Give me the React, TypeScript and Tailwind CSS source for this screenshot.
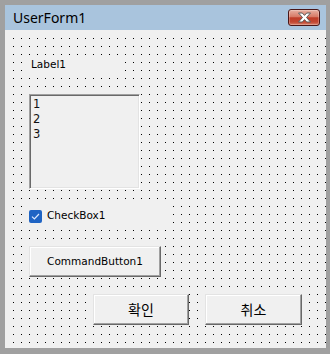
import React from "react";

const ui = "font-['DejaVu_Sans',sans-serif]";

const raised =
  "border border-t-[#e3e3e3] border-l-[#e3e3e3] border-r-[#696969] border-b-[#696969] shadow-[inset_-1px_-1px_0_#a0a0a0,inset_1px_1px_0_#ffffff] bg-[#f0f0f0]";

const CloseButton: React.FC = () => (
  <div className="w-[32px] h-[17px] rounded-[3px] border border-[#4a1616] bg-[linear-gradient(#e8b0a2,#d77a66_45%,#bf3d28_52%,#c24631_80%,#d9806a)] flex items-center justify-center shadow-[inset_0_0_0_1px_rgba(255,255,255,0.25)]">
    <svg width="15" height="11" viewBox="0 0 15 11">
      <path
        d="M1.5 1 H5.3 L7.5 3.4 L9.7 1 H13.5 L9.5 5.5 L13.5 10 H9.7 L7.5 7.6 L5.3 10 H1.5 L5.5 5.5 Z"
        fill="#ffffff"
        stroke="#5b5b5b"
        strokeWidth="1"
        strokeLinejoin="round"
      />
    </svg>
  </div>
);

const Button: React.FC<{ label: string; className?: string; font?: string }> = ({ label, className, font }) => (
  <div className={`${raised} flex items-center justify-center text-black ${font ?? ""} ${className ?? ""}`}>
    {label}
  </div>
);

export default function App() {
  return (
    <div className="w-[330px] h-[354px] bg-[#a0a0a0] pt-[5px] pl-[5px]">
      <div className="w-[321px] flex flex-col">
        {/* title bar */}
        <div className="h-[25px] bg-[#a9c4dd] flex items-center justify-between pl-[8px] pr-[6px]">
          <span className="font-['Noto_Sans',sans-serif] text-[14px] leading-none text-black">UserForm1</span>
          <CloseButton />
        </div>

        {/* client area */}
        <div className="h-[318px] bg-[#f0f0f0] pl-px pt-px flex">
          <div
            className={`flex-1 flex flex-col items-start bg-[image:conic-gradient(at_7px_7px,transparent_25%,#000_0_50%,transparent_0)] bg-size-[8px_8px] ${ui}`}
          >
            <div className="mt-[25px] ml-[21px] w-[96px] h-[18px] bg-[#f0f0f0] pl-[4px] pt-[1px] text-[10.5px] leading-[14px] text-black">
              Label1
            </div>

            <div className="mt-[20px] ml-[23px] w-[111px] h-[95px] bg-[#f0f0f0] border border-t-[#a0a0a0] border-l-[#a0a0a0] border-r-white border-b-white shadow-[inset_1px_1px_0_#696969,inset_-1px_-1px_0_#e3e3e3] pl-[3px] pt-[2px] text-[11.5px] leading-[15px] text-[#111]">
              <div>1</div>
              <div>2</div>
              <div>3</div>
            </div>

            <div className="mt-[15px] ml-[21px] w-[143px] h-[24px] bg-[#f0f0f0] flex items-center pl-[2px] gap-[5px] text-[10.5px] text-black">
              <div className="w-[13px] h-[13px] rounded-[2px] bg-[#1f64c4] flex items-center justify-center">
                <svg width="9" height="7" viewBox="0 0 9 7">
                  <path d="M1 3.6 L3.4 6 L8 1" fill="none" stroke="#dce9ff" strokeWidth="1.2" />
                </svg>
              </div>
              <span>CheckBox1</span>
            </div>

            <Button label="CommandButton1" className="mt-[18px] ml-[23px] w-[132px] h-[31px] text-[10.5px]" />

            <div className="mt-[17px] ml-[87px] flex gap-[16px]">
              <Button
                label="확인"
                className="w-[96px] h-[31px] text-[14px]"
                font="font-['Noto_Sans_CJK_KR',sans-serif]"
              />
              <Button
                label="취소"
                className="w-[97px] h-[31px] text-[14px]"
                font="font-['Noto_Sans_CJK_KR',sans-serif]"
              />
            </div>
          </div>
        </div>
      </div>
    </div>
  );
}
